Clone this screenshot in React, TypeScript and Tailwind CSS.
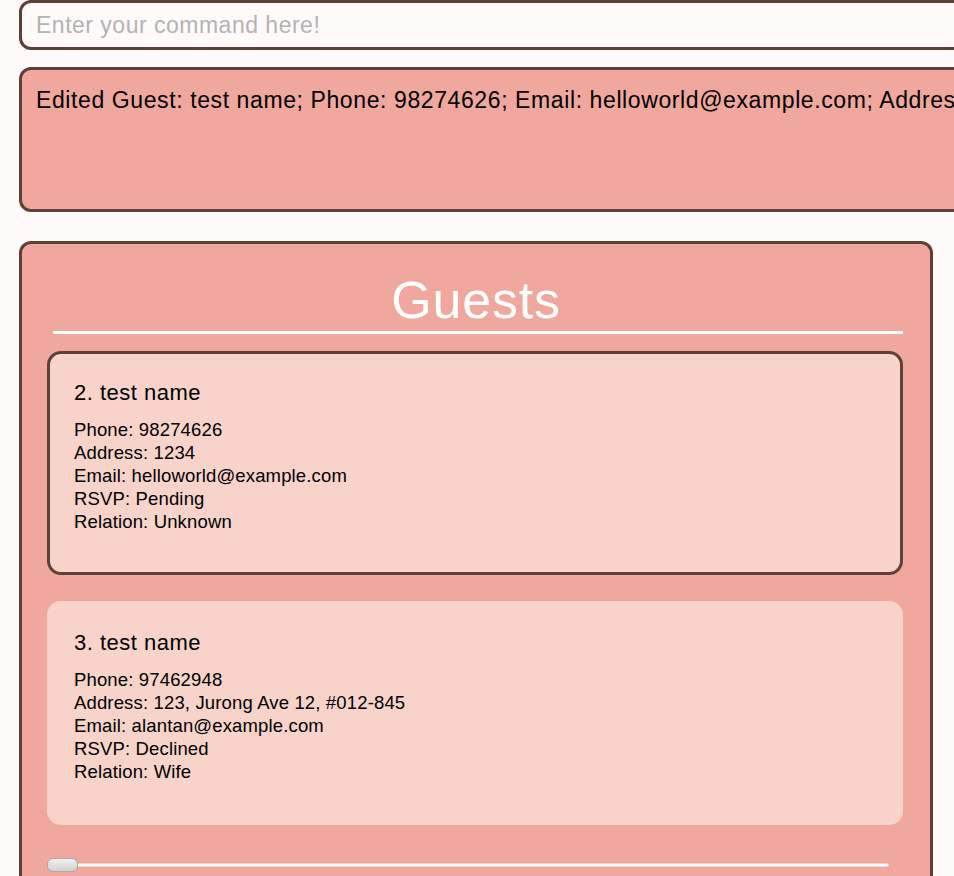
import React from 'react';

interface Guest {
  index: number;
  name: string;
  phone: string;
  address: string;
  email: string;
  rsvp: string;
  relation: string;
}

const guests: Guest[] = [
  { index: 2, name: 'test name', phone: '98274626', address: '1234', email: 'helloworld@example.com', rsvp: 'Pending', relation: 'Unknown' },
  { index: 3, name: 'test name', phone: '97462948', address: '123, Jurong Ave 12, #012-845', email: 'alantan@example.com', rsvp: 'Declined', relation: 'Wife' },
];

const GuestCard: React.FC<{ guest: Guest; selected?: boolean }> = ({ guest, selected }) => {
  return (
    <div
      className={`h-[224px] rounded-[14px] border-[3px] bg-[#f7d3ca] pl-[24px] pt-[26px] ${
        selected ? 'border-[#5d4037]' : 'border-transparent'
      }`}
    >
      <div className="text-[22px] leading-[26px] tracking-[0.5px] text-black">
        {guest.index}. {guest.name}
      </div>
      <div className="mt-[12px] text-[18.5px] leading-[23px] tracking-[0.15px] text-black">
        <div>Phone: {guest.phone}</div>
        <div>Address: {guest.address}</div>
        <div>Email: {guest.email}</div>
        <div>RSVP: {guest.rsvp}</div>
        <div>Relation: {guest.relation}</div>
      </div>
    </div>
  );
};

export default function App() {
  return (
    <div className="h-[876px] w-full overflow-hidden bg-[#fffafa] pl-[19px] font-['Liberation_Sans',Arial,sans-serif]">
      <div className="flex h-[50px] w-[1100px] items-center rounded-[12px] border-[3px] border-[#5d4037] bg-[#fffafa] px-[14px]">
        <input
          className="w-full bg-transparent text-[23px] tracking-[0.5px] text-black outline-none placeholder:text-[#b3b3b3]"
          placeholder="Enter your command here!"
        />
      </div>

      <div className="mt-[17px] h-[145px] w-[1100px] overflow-hidden rounded-[12px] border-[3px] border-[#5d4037] bg-[#f0a79e] px-[14px] pt-[17px]">
        <p className="whitespace-nowrap text-[23px] leading-[26px] tracking-[0.6px] text-black">
          Edited Guest: test name; Phone: 98274626; Email: helloworld@example.com; Address: 1234; RSVP: Pending; Relation: Unknown
        </p>
      </div>

      <div className="mt-[29px] h-[700px] w-[914px] rounded-[12px] border-[3px] border-[#5d4037] bg-[#f0a79e] pt-[27px]">
        <h1 className="text-center text-[52px] leading-[58px] tracking-[0.8px] text-white">Guests</h1>
        <div className="ml-[31px] mt-[2px] h-[3px] w-[850px] bg-white" />

        <div className="ml-[25px] mt-[17px] flex w-[856px] flex-col gap-[26px]">
          {guests.map((g, i) => (
            <GuestCard key={g.index} guest={g} selected={i === 0} />
          ))}
        </div>

        <div className="relative ml-[25px] mt-[33px] h-[14px] w-[842px]">
          <div className="absolute left-0 right-0 top-[5px] h-[4px] rounded-full border border-[#f7d3ca] bg-white" />
          <div className="absolute left-0 top-0 h-[14px] w-[31px] rounded-[6px] border border-[#a8a8a8] bg-gradient-to-b from-[#f0f0f0] to-[#d2d2d2]" />
        </div>
      </div>
    </div>
  );
}
